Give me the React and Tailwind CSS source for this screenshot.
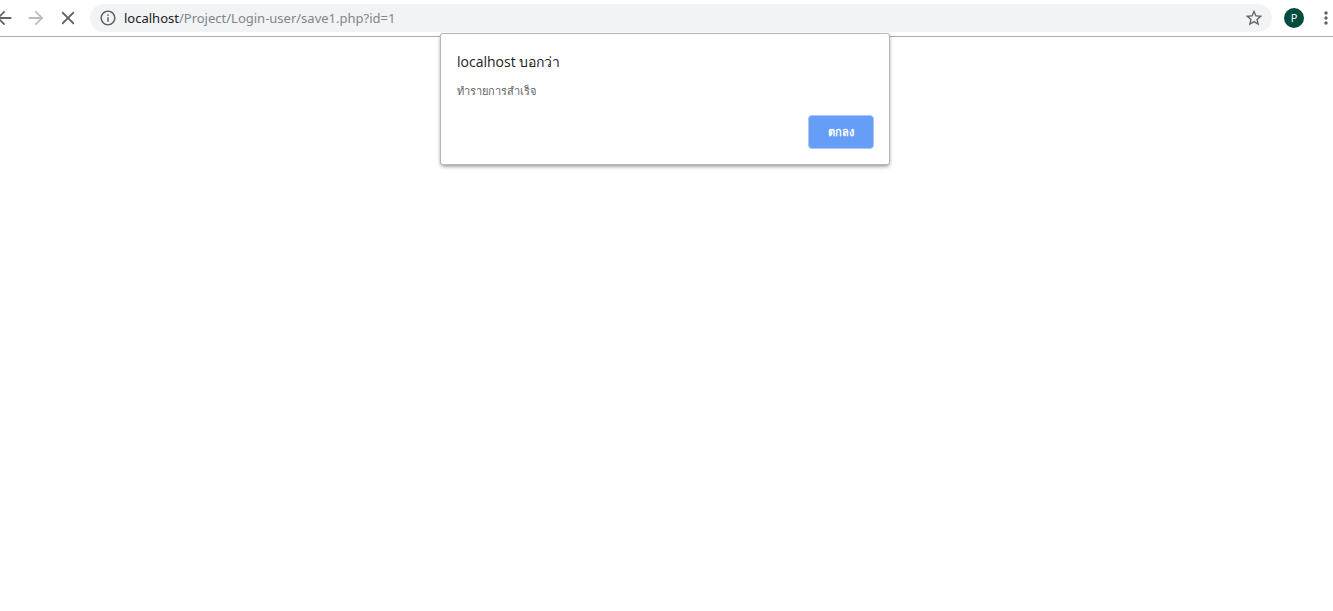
import { useState } from 'react';
import { MdArrowBack, MdArrowForward, MdClose, MdInfoOutline, MdMoreVert, MdStarBorder } from 'react-icons/md';

const navButtons = [
  { label: 'Back', Icon: MdArrowBack, color: 'text-[#5f6368]' },
  { label: 'Forward', Icon: MdArrowForward, color: 'text-[#babcbe]' },
  { label: 'Stop', Icon: MdClose, color: 'text-[#5f6368]' },
];

function Toolbar() {
  const [path, setPath] = useState('/Project/Login-user/save1.php?id=1');

  return (
    <header className="flex items-center h-[37px] border-b border-[#a9abad] overflow-hidden">
      <nav className="flex shrink-0 -ml-3 mr-1.5">
        {navButtons.map(({ label, Icon, color }) => (
          <button key={label} aria-label={label} className={`flex items-center justify-center w-8 h-7 ${color}`}>
            <Icon size={22} />
          </button>
        ))}
      </nav>

      <div className="flex flex-1 min-w-0 items-center h-7 rounded-full bg-[#f1f3f4] pl-[9px] pr-2 font-['Noto_Sans',sans-serif] text-[13px] leading-5">
        <button aria-label="Site information" className="mr-[7px] text-[#5f6368]">
          <MdInfoOutline size={18} />
        </button>
        <label htmlFor="address" className="text-[#202124]">localhost</label>
        <input id="address" value={path} onChange={e => setPath(e.target.value)}
          className="flex-1 min-w-0 bg-transparent text-[#80868b] focus:outline-none" />
        <button aria-label="Bookmark" className="text-[#5f6368]">
          <MdStarBorder size={20} />
        </button>
      </div>

      <button aria-label="Profile" className="shrink-0 w-5 h-5 ml-3 rounded-full bg-[#004d40] text-white text-[11px] leading-5">
        P
      </button>
      <button aria-label="Menu" className="shrink-0 ml-3 -mr-[3px] text-[#5f6368]">
        <MdMoreVert size={20} />
      </button>
    </header>
  );
}

function AlertDialog({ onClose }) {
  return (
    <div className="absolute inset-x-0 top-[34px] flex justify-center pr-[3px]">
      <div role="alertdialog" aria-labelledby="alert-title" aria-describedby="alert-message"
        className="w-[448px] rounded-xs bg-white pt-4 pb-[15px] pl-4 pr-[15px] shadow-[0_0_0_1px_#b8b8b8,0_2px_4px_rgba(0,0,0,0.5)]">
        <h1 id="alert-title" className="text-sm leading-6 text-[#202124]">localhost บอกว่า</h1>
        <p id="alert-message" className="mt-[5px] text-[11px] leading-6 text-[#5f6368]">ทำรายการสำเร็จ</p>
        <div className="flex justify-end mt-3">
          <button onClick={onClose} className="w-[66px] h-[34px] rounded border border-[#a8c7fa] bg-[#669df6] text-[11px] font-semibold text-white">
            ตกลง
          </button>
        </div>
      </div>
    </div>
  );
}

export default function App() {
  const [open, setOpen] = useState(true);

  return (
    <div className="relative min-h-screen bg-white overflow-hidden font-['Open_Sans','Noto_Sans',sans-serif]">
      <Toolbar />
      {open && <AlertDialog onClose={() => setOpen(false)} />}
    </div>
  );
}
